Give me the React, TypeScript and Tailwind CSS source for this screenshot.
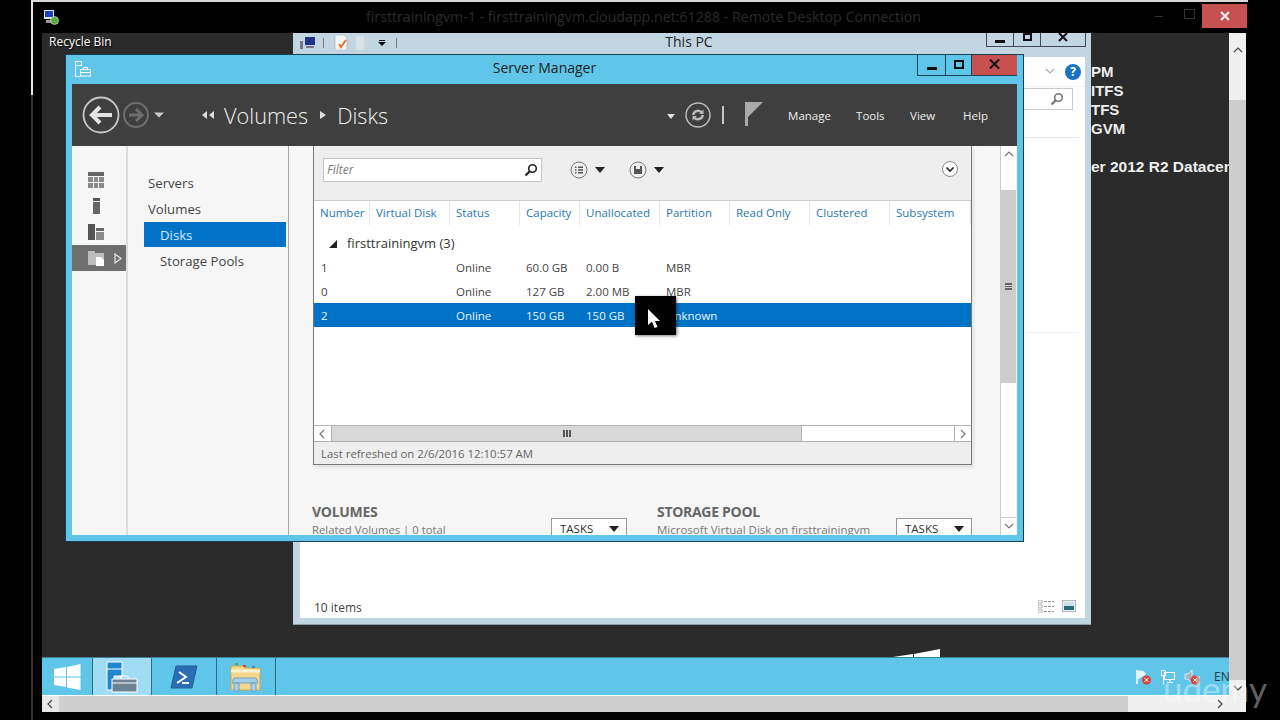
import React from "react";

const columns = ["Number", "Virtual Disk", "Status", "Capacity", "Unallocated", "Partition", "Read Only", "Clustered", "Subsystem"];

const rows = [
    { number: "1", status: "Online", capacity: "60.0 GB", free: "0.00 B", partition: "MBR", selected: false },
    { number: "0", status: "Online", capacity: "127 GB", free: "2.00 MB", partition: "MBR", selected: false },
    { number: "2", status: "Online", capacity: "150 GB", free: "150 GB", partition: "Unknown", selected: true },
];

const gridCols = "grid grid-cols-[56px_80px_70px_60px_80px_70px_80px_80px_81px]";

const Caret = ({ color = "#222" }: { color?: string }) => (
    <svg width="10" height="6" viewBox="0 0 10 6"><path d="M0 0h10L5 6z" fill={color} /></svg>
);

const Chevron = ({ dir, color = "#777" }: { dir: "up" | "down" | "left" | "right"; color?: string }) => {
    const d = { up: "M1 6l4-4 4 4", down: "M1 2l4 4 4-4", left: "M6 1L2 5l4 4", right: "M3 1l4 4-4 4" }[dir];
    return <svg width="10" height="10" viewBox="0 0 10 10"><path d={d} fill="none" stroke={color} strokeWidth="1.2" /></svg>;
};

const Magnifier = ({ color = "#222" }: { color?: string }) => (
    <svg width="14" height="14" viewBox="0 0 14 14">
        <circle cx="8.500" cy="5.500" r="3.800" fill="none" stroke={color} strokeWidth="1.600" />
        <path d="M5.800 8.200L1.500 12.500" stroke={color} strokeWidth="2.200" />
    </svg>
);

const SmBox = ({ w, icon, red }: { w: string; icon: "min" | "max" | "x"; red?: boolean }) => (
    <div className={`${w} h-full flex items-center justify-center border-l border-b border-[#17455a] ${red ? "bg-[#c75050]" : ""}`}>
        {icon === "min" && <div className="w-[10px] h-[3px] bg-[#111] mt-[6px]" />}
        {icon === "max" && <div className="w-[10px] h-[9px] border-2 border-[#111] mb-[2px]" />}
        {icon === "x" && (
            <svg width="11" height="10" viewBox="0 0 11 10" className="mb-[2px]"><path d="M1 0.500l9 9M10 0.500l-9 9" stroke="#111" strokeWidth="2" /></svg>
        )}
    </div>
);

const BackArrow = () => (
    <svg width="90" height="40" viewBox="0 0 90 40">
        <circle cx="19" cy="20" r="17.500" fill="none" stroke="#c8c8c8" strokeWidth="1.800" />
        <path d="M18 12l-8 8 8 8M10 20h20" fill="none" stroke="#e4e4e4" strokeWidth="4" />
        <circle cx="54" cy="20" r="12" fill="none" stroke="#6e6e6e" strokeWidth="2" />
        <path d="M54 14l6 6-6 6M60 20H47" fill="none" stroke="#6e6e6e" strokeWidth="3" />
        <path d="M72 17.500h10l-5 5z" fill="#c8c8c8" />
    </svg>
);

const SideIcons = () => (
    <div className="w-[54px] flex flex-col bg-[#f6f6f6] pt-[21px]">
        <div className="h-[26px] flex items-center pl-[16px]">
            <svg width="16" height="16" viewBox="0 0 16 16">
                <path d="M0 0h16v4H0z" fill="#666" />
                <path d="M0 5h5v5H0zM6 5h4v5H6zM11 5h5v5h-5zM0 11h5v5H0zM6 11h4v5H6zM11 11h5v5h-5z" fill="#8a8a8a" />
            </svg>
        </div>
        <div className="h-[26px] flex items-center pl-[16px]">
            <svg width="16" height="16" viewBox="0 0 16 16"><path d="M5 0h7v3H5z" fill="#555" /><path d="M5 4h7v12H5z" fill="#666" /></svg>
        </div>
        <div className="h-[26px] flex items-center pl-[16px]">
            <svg width="16" height="16" viewBox="0 0 16 16">
                <path d="M0 0h7v16H0z" fill="#555" /><path d="M8 4h8v3H8z" fill="#666" /><path d="M8 8h8v8H8z" fill="#8a8a8a" />
            </svg>
        </div>
        <div className="h-[26px] flex items-center pl-[16px] bg-[#6f6f6f]">
            <svg width="16" height="16" viewBox="0 0 16 16">
                <path d="M0 1h7v2h9v12H0z" fill="#bdbdbd" /><path d="M8 7h5l3 3v6H8z" fill="#fff" />
            </svg>
            <svg width="8" height="11" viewBox="0 0 8 11" className="ml-[10px]"><path d="M1 1l6 4.500-6 4.500z" fill="none" stroke="#e8e8e8" strokeWidth="1.200" /></svg>
        </div>
    </div>
);

const TasksButton = () => (
    <div className="w-[76px] h-[24px] shrink-0 mt-[15px] flex items-center justify-between pl-[8px] pr-[7px] border border-[#999] bg-white text-[11.5px] leading-[16px] pb-[3px] text-[#333]">
        <span>TASKS</span>
        <Caret />
    </div>
);

const ServerManager = () => (
    <div className="absolute left-[23px] top-[21px] w-[959px] h-[488px] bg-[#5fc6ea] border border-[#173f50] flex flex-col text-[#444]">
        <div className="h-[29px] shrink-0 flex relative">
            <svg width="18" height="16" viewBox="0 0 18 16" className="absolute left-[8px] top-[6px]" fill="none" stroke="#fff" strokeWidth="1">
                <rect x="1.500" y="0.500" width="6" height="4" />
                <path d="M1.500 4.500v11h5" />
                <rect x="6.500" y="8.500" width="10" height="6.500" />
                <path d="M9.500 8.500v-2h4v2M6.500 11.500h10" />
            </svg>
            <div className="flex-1 text-center text-[14px] leading-[20px] text-[#222] pt-[3px]">Server Manager</div>
            <div className="absolute left-[851px] top-0 h-[21px] flex">
                <SmBox w="w-[28px]" icon="min" />
                <SmBox w="w-[26px]" icon="max" />
                <SmBox w="w-[46px]" icon="x" red />
            </div>
        </div>
        <div className="ml-[6px] mr-[6px] h-[451px] flex flex-col overflow-hidden">
            <div className="h-[62px] shrink-0 bg-[#3f3f3f] flex items-center text-[#f0f0f0]">
                <div className="ml-[10px] w-[104px] shrink-0 flex"><BackArrow /></div>
                <svg width="14" height="8" viewBox="0 0 14 8" className="ml-[15px]"><path d="M6 0v8L1 4zM13 0v8L8 4z" fill="#ddd" /></svg>
                <span className="ml-[9px] mt-[2px] text-[21.700px] font-light leading-none">Volumes</span>
                <svg width="6" height="8" viewBox="0 0 6 8" className="ml-[12px]"><path d="M0 0v8l6-4z" fill="#ddd" /></svg>
                <span className="ml-[11px] mt-[2px] text-[21.700px] font-light leading-none">Disks</span>
                <svg width="8" height="5" viewBox="0 0 8 5" className="ml-[279px] mt-[2px]"><path d="M0 0h8L4 5z" fill="#ddd" /></svg>
                <svg width="26" height="26" viewBox="0 0 26 26" className="ml-[10px]">
                    <circle cx="13" cy="13" r="12" fill="none" stroke="#bbb" strokeWidth="1.500" />
                    <path d="M7 13a6 6 0 0 1 10-4l1.500-1.500V12h-4.500l1.500-1.500a4 4 0 0 0-6 2.500zM19 13a6 6 0 0 1-10 4l-1.500 1.500V14H12l-1.500 1.500a4 4 0 0 0 6-2.500z" fill="#bbb" />
                </svg>
                <div className="ml-[11px] w-[2px] h-[18px] bg-[#c8c8c8]" />
                <svg width="18" height="24" viewBox="0 0 18 24" className="ml-[21px] mb-[2px]"><path d="M0 0h3v24H0z" fill="#aaa" /><path d="M3 0h15l-15 15z" fill="#aaa" /></svg>
                <div className="ml-[25px] mt-[1px] flex text-[11.500px] text-[#eee]">
                    <span className="w-[68px]">Manage</span>
                    <span className="w-[54px]">Tools</span>
                    <span className="w-[53px]">View</span>
                    <span>Help</span>
                </div>
            </div>
            <div className="flex-1 flex min-h-0 bg-[#f6f6f6]">
                <SideIcons />
                <div className="w-[2px] bg-[#dcdcdc]" />
                <nav className="w-[160px] border-r border-[#a8a8a8] pt-[24px] text-[13.200px] text-[#444] box-content">
                    <div className="h-[26px] pl-[20px] leading-[26px]">Servers</div>
                    <div className="h-[26px] pl-[20px] leading-[26px]">Volumes</div>
                    <div className="h-[25px] ml-[16px] w-[142px] pl-[16px] leading-[27px] bg-[#0072c6] text-[#d5ecfb]">Disks</div>
                    <div className="h-[26px] pl-[32px] leading-[29px]">Storage Pools</div>
                </nav>
                <div className="w-[711px] shrink-0 overflow-hidden">
                    <div className="ml-[24px] w-[659px] h-[319px] bg-[#eeeeee] border-x border-b border-[#777] shadow-[2px_3px_3px_rgba(0,0,0,0.08)] flex flex-col">
                        <div className="h-[54px] shrink-0 flex items-start pt-[12px] pl-[9px] relative">
                            <div className="w-[219px] h-[24px] bg-white border border-[#c4c4c4] flex items-center justify-between pl-[3px] pr-[3px] italic text-[12px] text-[#777]">
                                <span>Filter</span>
                                <Magnifier />
                            </div>
                            <div className="ml-[28px] mt-[3px] flex items-center gap-[7px]">
                                <svg width="18" height="18" viewBox="0 0 18 18">
                                    <circle cx="9" cy="9" r="8" fill="none" stroke="#777" />
                                    <path d="M5 5.500h1.500v1.500H5zM8 5.500h5v1.500H8zM5 8.250h1.500v1.500H5zM8 8.250h5v1.500H8zM5 11h1.500v1.500H5zM8 11h5v1.500H8z" fill="#555" />
                                </svg>
                                <Caret />
                            </div>
                            <div className="ml-[24px] mt-[3px] flex items-center gap-[7px]">
                                <svg width="18" height="18" viewBox="0 0 18 18">
                                    <circle cx="9" cy="9" r="8" fill="none" stroke="#777" />
                                    <path d="M5 5h8v8H5z" fill="#555" /><path d="M7 5h4v3H7z" fill="#eee" />
                                </svg>
                                <Caret />
                            </div>
                            <svg width="16" height="16" viewBox="0 0 16 16" className="absolute left-[628px] top-[15px]">
                                <circle cx="8" cy="8" r="7.500" fill="#fff" stroke="#888" />
                                <path d="M4.500 6.500L8 10l3.500-3.500" fill="none" stroke="#222" strokeWidth="1.600" />
                            </svg>
                        </div>
                        <div className={`${gridCols} h-[25px] shrink-0 bg-white border-t border-[#ccc] text-[11.500px] text-[#2a77ad]`}>
                            {columns.map((c) => (
                                <div key={c} className="pl-[6px] leading-[24px] border-r border-[#e6e6e6] whitespace-nowrap">{c}</div>
                            ))}
                        </div>
                        <div className="h-[200px] shrink-0 bg-white text-[11.500px]">
                            <div className="h-[30px] pt-[8px] flex items-center pl-[15px] text-[13px] text-[#333]">
                                <svg width="8" height="8" viewBox="0 0 8 8"><path d="M8 0v8H0z" fill="#222" /></svg>
                                <span className="ml-[10px]">firsttrainingvm (3)</span>
                            </div>
                            {rows.map((r) => (
                                <div key={r.number} className={`${gridCols} h-[24px] leading-[26px] ${r.selected ? "bg-[#0072c6] text-[#e8f4fc]" : "text-[#444]"}`}>
                                    <div className="pl-[7px]">{r.number}</div>
                                    <div />
                                    <div className="pl-[6px]">{r.status}</div>
                                    <div className="pl-[6px]">{r.capacity}</div>
                                    <div className="pl-[6px]">{r.free}</div>
                                    <div className="pl-[6px]">{r.partition}</div>
                                </div>
                            ))}
                        </div>
                        <div className="h-[17px] shrink-0 bg-white border-y border-[#b0b0b0] flex items-center">
                            <div className="w-[17px] h-full flex items-center justify-center"><Chevron dir="left" /></div>
                            <div className="w-[471px] h-full bg-[#d8d8d8] border-x border-[#b0b0b0] flex items-center justify-center">
                                <div className="w-[8px] h-[7px] border-x-2 border-[#555] flex justify-center"><div className="w-[2px] bg-[#555]" /></div>
                            </div>
                            <div className="flex-1" />
                            <div className="w-[17px] h-full border-l border-[#b0b0b0] flex items-center justify-center"><Chevron dir="right" /></div>
                        </div>
                        <div className="flex-1 pl-[7px] leading-[24px] text-[11.400px] text-[#666]">Last refreshed on 2/6/2016 12:10:57 AM</div>
                    </div>
                    <div className="mt-[38px] ml-[23px] flex gap-[30px]">
                        <div className="w-[315px] flex justify-between">
                            <div>
                                <div className="text-[14px] font-bold text-[#666] leading-[18px] tracking-[-0.3px]">VOLUMES</div>
                                <div className="text-[11.300px] text-[#777] leading-[18px]">Related Volumes | 0 total</div>
                            </div>
                            <TasksButton />
                        </div>
                        <div className="w-[315px] flex justify-between">
                            <div>
                                <div className="text-[14px] font-bold text-[#666] leading-[18px] tracking-[-0.3px]">STORAGE POOL</div>
                                <div className="text-[11.500px] text-[#777] leading-[18px] whitespace-nowrap">Microsoft Virtual Disk on firsttrainingvm</div>
                            </div>
                            <TasksButton />
                        </div>
                    </div>
                </div>
                <div className="w-[16px] shrink-0 bg-white border-l border-[#ccc] flex flex-col items-center">
                    <div className="h-[18px] flex items-center"><Chevron dir="up" /></div>
                    <div className="mt-[26px] w-full h-[193px] bg-[#cdcdcd] flex items-center justify-center">
                        <div className="w-[7px] h-[7px] border-y-2 border-[#666] flex flex-col justify-center"><div className="h-[1px] bg-[#666]" /></div>
                    </div>
                    <div className="mt-auto w-full h-[18px] border-t border-[#ccc] flex items-center justify-center"><Chevron dir="down" /></div>
                </div>
            </div>
        </div>
    </div>
);

const ThisPC = () => (
    <div className="absolute left-[251px] top-0 w-[798px] h-[592px] bg-[#c1d6e0] border-b border-[#8a9aa2] flex flex-col">
        <div className="h-[24px] flex items-start relative">
            <div className="ml-[7px] mt-[2px] flex items-center">
                <svg width="16" height="14" viewBox="0 0 16 14"><path d="M5 1h10v8H5z" fill="#22338a" /><path d="M0 5h3v8H0zM6 10h8v2H6z" fill="#778" /></svg>
                <div className="w-[1px] h-[10px] ml-[7px] bg-[#777]" />
                <svg width="15" height="15" viewBox="0 0 15 15" className="ml-[10px]"><path d="M1 0h9l3 3v12H1z" fill="#f5f5f5" stroke="#999" strokeWidth=".5" /><path d="M5 9l2 3 5-7" fill="none" stroke="#e4703c" strokeWidth="2" /></svg>
                <svg width="13" height="14" viewBox="0 0 13 14" className="ml-[7px]"><path d="M0 0h8v14H0z" fill="#d8e3e8" /><path d="M8 2h4v10H8z" fill="#cbd8df" /></svg>
                <svg width="8" height="8" viewBox="0 0 8 8" className="ml-[9px]"><path d="M1 1h6v1H1zM0 3h8L4 7z" fill="#111" /></svg>
                <div className="w-[1px] h-[10px] ml-[10px] bg-[#777]" />
            </div>
            <div className="absolute left-0 right-[6px] text-center text-[14px] leading-[18px] text-[#222]">This PC</div>
            <div className="absolute left-[693px] top-0 h-[14px] flex">
                <div className="w-[27px] border-l border-b border-[#445] flex items-end justify-center pb-[3px]"><div className="w-[10px] h-[3px] bg-[#111]" /></div>
                <div className="w-[27px] border-l border-b border-[#445] flex items-start justify-center"><div className="w-[9px] h-[8px] border-2 border-[#111]" /></div>
                <div className="w-[46px] border-x border-b border-[#445] flex items-start justify-center">
                    <svg width="10" height="9" viewBox="0 0 10 9"><path d="M1 0l8 8M9 0L1 8" stroke="#111" strokeWidth="2" /></svg>
                </div>
            </div>
        </div>
        <div className="ml-[7px] mr-[6px] h-[561px] bg-white relative flex flex-col">
            <div className="h-[30px] flex items-center justify-end pr-[2px] gap-[10px] border-b border-[#f2f2f2]">
                <Chevron dir="down" color="#aaa" />
                <div className="w-[16px] h-[16px] rounded-full bg-[#1a72c4] text-white text-[12px] font-bold leading-[16px] text-center mr-[2px]">?</div>
            </div>
            <div className="flex justify-end pr-[12px] mt-[1px]">
                <div className="w-[60px] h-[22px] border border-[#c9c9c9] flex items-center justify-end pr-[8px]"><Magnifier color="#777" /></div>
            </div>
            <div className="mt-[27px] border-t border-[#eaeaea] mr-[6px]" />
            <div className="mt-[194px] border-t border-[#f1f1f1] mr-[6px]" />
            <div className="mt-auto h-[24px] flex items-center justify-between pl-[14px] pr-[9px] text-[12px] text-[#444]">
                <span className="mt-[3px]">10 items</span>
                <div className="flex items-center gap-[8px]">
                    <svg width="16" height="13" viewBox="0 0 16 13"><path d="M0 0h4v3H0zM0 5h4v3H0zM0 10h4v3H0z" fill="none" stroke="#999" strokeWidth=".8" /><path d="M6 1.500h10M6 6.500h10M6 11.500h10" stroke="#999" strokeDasharray="3 1" /></svg>
                    <svg width="14" height="12" viewBox="0 0 14 12"><path d="M0 0h14v12H0z" fill="#e9eef0" stroke="#888" /><path d="M2 2h10v4H2z" fill="#cfe3ea" /><path d="M2 6h10v4H2z" fill="#2a6b78" /></svg>
                </div>
            </div>
        </div>
    </div>
);

const Taskbar = () => (
    <div className="h-[38px] shrink-0 bg-[#5fc6ea] border-t border-[#3e7f99] flex relative overflow-hidden">
        <div className="w-[51px] flex items-center justify-center border-r border-[#2f6d87]">
            <svg width="28" height="26" viewBox="0 0 28 26"><path d="M1 5l12-2v9.500H1zM14 3l13.500-3v12.500H14zM1 13.500h12V23L1 21zM14 13.500h13.500V26L14 23.500z" fill="#fff" /></svg>
        </div>
        <div className="w-[59px] bg-[#a0dcf3] flex items-center justify-center border-r border-[#2f6d87]">
            <svg width="32" height="32" viewBox="0 0 32 32">
                <path d="M1 1h15v14H8v14H1z" fill="#1f86d0" stroke="#fff" />
                <path d="M9 16h7M1 8h15" stroke="#fff" />
                <path d="M6 18h25v13H6z" fill="#6c8295" stroke="#fff" />
                <path d="M15 18v-3h7v3M6 22h25" fill="none" stroke="#fff" />
            </svg>
        </div>
        <div className="w-[65px] flex items-center justify-center border-r border-[#2f6d87]">
            <svg width="28" height="24" viewBox="0 0 28 24">
                <path d="M6 1h21l-5 22H1z" fill="#2a6db4" stroke="#2a5f98" />
                <path d="M9 7l7 5-9 6M12 18h7" fill="none" stroke="#fff" strokeWidth="2" />
            </svg>
        </div>
        <div className="w-[59px] flex items-center justify-center border-r border-[#2f6d87]">
            <svg width="32" height="30" viewBox="0 0 32 30">
                <path d="M1 4h12l2 2h15v22H1z" fill="#f4d78a" stroke="#c9a95b" />
                <path d="M1 9h29" stroke="#fff3cf" strokeWidth="3" />
                <path d="M5 1h3v2H5z" fill="#3eb34f" /><path d="M13 3h3v2h-3z" fill="#c9483a" /><path d="M22 4h3v2h-3z" fill="#3a8ad0" />
                <path d="M4 16h22l2 5H2zM4 21h5v8H4zM21 21h5v8h-5z" fill="#a6d0e8" stroke="#6fa3c4" />
            </svg>
        </div>
        <div className="ml-auto flex items-center pr-0">
            <svg width="16" height="16" viewBox="0 0 16 16">
                <path d="M1 1v14" stroke="#fff" strokeWidth="1.500" /><path d="M2 2h5l3 3-8 5z" fill="#e6f6fc" stroke="#fff" strokeWidth=".5" />
                <circle cx="10.500" cy="11" r="4.500" fill="#d8453c" /><path d="M8.500 9l4 4M12.500 9l-4 4" stroke="#fff" />
            </svg>
            <svg width="16" height="16" viewBox="0 0 16 16" className="ml-[8px]" fill="none" stroke="#fff">
                <rect x="1.500" y="1.500" width="4" height="5" /><rect x="4.500" y="3.500" width="10" height="7" /><path d="M3.500 6.500v9M7 13.500h6M10 10.500v3" />
            </svg>
            <svg width="16" height="16" viewBox="0 0 16 16" className="ml-[8px]">
                <path d="M1 5h3l4-4v13L4 10H1z" fill="#9fb4bf" stroke="#fff" strokeWidth=".7" />
                <circle cx="11" cy="11" r="4.500" fill="#d8453c" /><path d="M9 9l4 4M13 9l-4 4" stroke="#fff" />
            </svg>
            <span className="ml-[14px] text-[12px] text-[#1c3a47] w-[15px] overflow-hidden">EN</span>
        </div>
    </div>
);

export default function App() {
    return (
        <div className="relative w-[1280px] h-[720px] bg-black overflow-hidden flex font-['Open_Sans',sans-serif]">
            <div className="ml-[31px] w-[2px] h-[720px] flex flex-col">
                <div className="h-[95px] bg-[#e6e6e6]" />
                <div className="flex-1 bg-[#333]" />
            </div>
            <div className="w-[1215px] h-[720px] flex flex-col">
                <div className="h-[2px] bg-[#d8d8d8]" />
                <div className="h-[31px] shrink-0 flex items-start relative">
                    <svg width="16" height="16" viewBox="0 0 16 16" className="ml-[10px] mt-[7px]">
                        <path d="M1 1h10v9H1z" fill="#dfe6f0" /><path d="M2 2h8v6H2z" fill="#1c3fc0" /><path d="M3 11h8v3H3z" fill="#999" />
                        <circle cx="11.500" cy="11.500" r="4" fill="#5da83c" stroke="#fff" strokeWidth=".5" />
                    </svg>
                    <span className="ml-[307px] mt-[4px] text-[14.200px] text-[#2b2b2b] whitespace-nowrap">firsttrainingvm-1 - firsttrainingvm.cloudapp.net:61288 - Remote Desktop Connection</span>
                    <div className="absolute left-[1122px] top-[14px] w-[8px] h-[1px] bg-[#333]" />
                    <div className="absolute left-[1151px] top-[7px] w-[11px] h-[10px] border border-[#333]" />
                    <div className="absolute left-[1169px] top-[2px] w-[45px] h-[24px] bg-[#c75050] flex items-center justify-center">
                        <svg width="10" height="10" viewBox="0 0 10 10"><path d="M1 1l8 8M9 1l-8 8" stroke="#fff" strokeWidth="1.800" /></svg>
                    </div>
                </div>
                <div className="flex-1 flex min-h-0">
                    <div className="w-[9px]" />
                    <div className="w-[1187px] flex flex-col">
                        <div className="h-[624px] shrink-0 bg-[#2b2b2b] relative overflow-hidden">
                            <div className="absolute left-[7px] top-0 text-[12px] text-white [text-shadow:1px_1px_1px_#000]">Recycle Bin</div>
                            <ThisPC />
                            <ServerManager />
                            <div className="absolute left-[1049px] top-[29px] w-[138px] overflow-hidden font-['Liberation_Sans',sans-serif] font-bold text-[15px] leading-[19px] text-[#eee] whitespace-nowrap">
                                <div>PM</div>
                                <div>ITFS</div>
                                <div>TFS</div>
                                <div>GVM</div>
                                <div className="mt-[19px] text-[15.500px]">er 2012 R2 Datacen</div>
                            </div>
                            <svg width="48" height="9" viewBox="0 0 48 9" className="absolute left-[851px] top-[615px]"><path d="M0 9l20-3v3zM21 6l26-5v8H21z" fill="#fff" /></svg>
                        </div>
                        <Taskbar />
                        <div className="h-[1px] bg-white" />
                        <div className="h-[16px] bg-[#cfcfcf] flex">
                            <div className="w-[17px] bg-[#e8e8e8] flex items-center justify-center"><Chevron dir="left" color="#444" /></div>
                            <div className="flex-1" />
                            <div className="w-[101px] bg-[#f0f0f0] flex items-center justify-end pr-[4px]"><Chevron dir="right" color="#444" /></div>
                        </div>
                    </div>
                    <div className="w-[17px] h-[679px] bg-[#f0f0f0] flex flex-col items-center">
                        <div className="h-[36px] flex items-center"><Chevron dir="up" color="#444" /></div>
                        <div className="mt-[31px] w-full h-[580px] bg-[#cdcdcd]" />
                        <div className="h-[17px] flex items-center"><Chevron dir="down" color="#444" /></div>
                    </div>
                </div>
            </div>
            <div className="absolute left-[635px] top-[296px] w-[41px] h-[39px] bg-black shadow-[1px_1px_3px_rgba(0,0,0,0.5)]">
                <svg width="14" height="20" viewBox="0 0 14 20" className="absolute left-[13px] top-[13px]"><path d="M0 0v16l4-3.500 2.500 6.500 3-1-2.500-6h5z" fill="#fff" /></svg>
            </div>
            <div className="absolute left-[1163px] top-[664px] text-[35px] leading-[48px] text-white/40 font-['Lato',sans-serif]">udemy</div>
        </div>
    );
}
